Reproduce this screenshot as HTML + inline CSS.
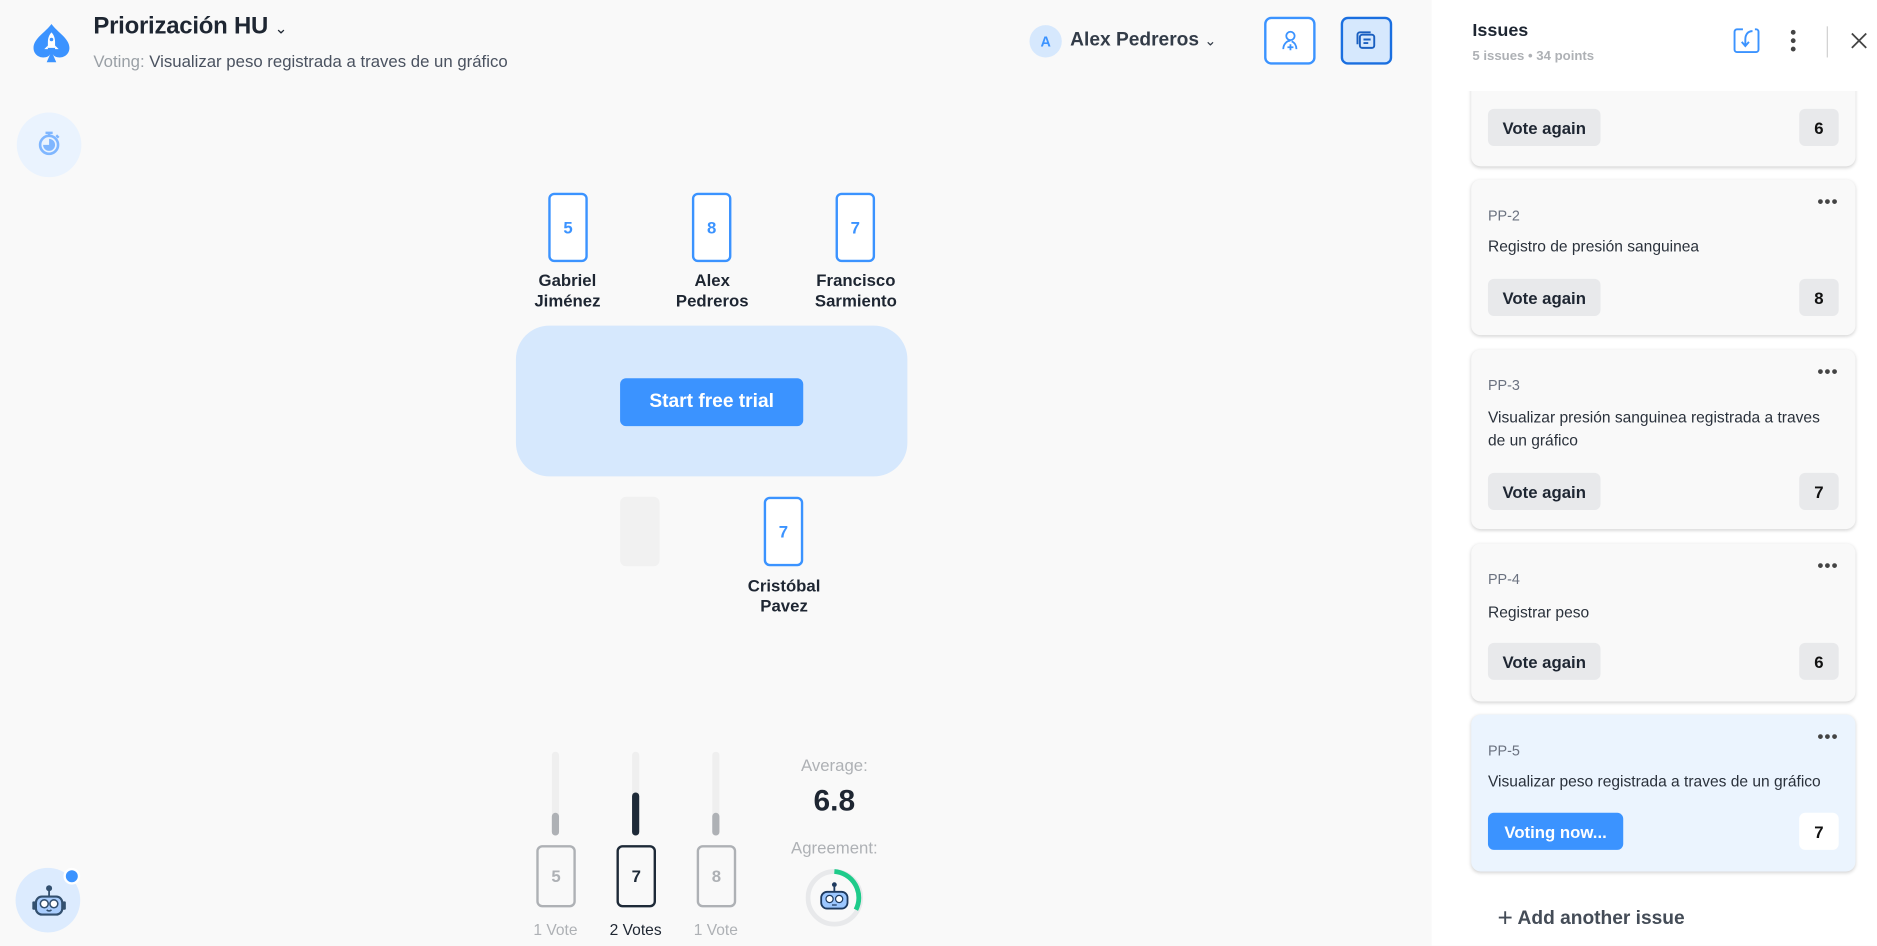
<!DOCTYPE html>
<html><head><meta charset="utf-8"><style>
*{box-sizing:border-box;margin:0;padding:0}
html,body{width:1877px;height:946px;overflow:hidden;background:#f9f9f9;font-family:"Liberation Sans","DejaVu Sans",sans-serif}
#w{position:absolute;left:0;top:0;width:1568px;height:790px;transform:scale(1.19707);transform-origin:0 0}
.a{position:absolute}
.pc{position:absolute;width:33px;height:58px;border:2px solid #3b93ff;border-radius:5px;background:#fff;color:#3b93ff;font-weight:bold;font-size:14px;display:flex;align-items:center;justify-content:center}
.nm{position:absolute;width:120px;text-align:center;font-weight:bold;font-size:14px;line-height:17px;color:#1e2632}
.card{position:absolute;left:1229px;width:321px;background:#f9f9f9;border-radius:8px;box-shadow:0 1px 3px rgba(0,0,0,.18)}
.id{position:absolute;left:14px;font-size:12px;color:#6b7280}
.tt{position:absolute;left:14px;font-size:13px;color:#2a313b;line-height:19px;width:290px}
.va{position:absolute;left:14px;width:94px;height:31px;background:#e8e9eb;border-radius:5px;font-weight:bold;font-size:14px;color:#1e2632;display:flex;align-items:center;justify-content:center}
.sc{position:absolute;left:274px;width:33px;height:31px;background:#e8e9eb;border-radius:5px;font-weight:bold;font-size:14px;color:#111;display:flex;align-items:center;justify-content:center}
.dots{position:absolute;right:14px;font-size:14px;color:#444;letter-spacing:1px;font-weight:bold}
.bar{position:absolute;width:6px;height:70px;top:628px;background:#efefef;border-radius:3px}
.vc{position:absolute;top:706px;width:33px;height:52px;border:2px solid #aeb1b5;border-radius:5px;color:#aeb1b5;font-weight:bold;font-size:14px;display:flex;align-items:center;justify-content:center}
.vl{position:absolute;top:769px;width:80px;text-align:center;font-size:13px;color:#aeb1b5}
</style></head><body><div id="w">
<svg class="a" style="left:24px;top:18px" width="38" height="36" viewBox="0 0 38 36"><path d="M19 2C14 9 4 14 4 22c0 5 4 8 8 8 3 0 5-1 6-3l-3 7h8l-3-7c1 2 3 3 6 3 4 0 8-3 8-8 0-8-10-13-15-20z" fill="#3b93ff"/><path d="M19 9c-2 2-3 5-3 8v5h6v-5c0-3-1-6-3-8z" fill="#fff"/><circle cx="19" cy="15" r="1.5" fill="#3b93ff"/><path d="M16 20l-3 3h3zM22 20l3 3h-3z" fill="#fff"/></svg>
<div class="a" style="left:78px;top:11px;font-size:20px;font-weight:bold;color:#1e2632;letter-spacing:-0.2px">Priorización HU <span style="font-size:13px;font-weight:normal">&#8964;</span></div>
<div class="a" style="left:78px;top:43px;font-size:14px;color:#4a5260"><span style="color:#9aa0a6">Voting:</span> Visualizar peso registrada a traves de un gráfico</div>
<div class="a" style="left:14px;top:94px;width:54px;height:54px;border-radius:50%;background:#eaf3fe"></div>
<svg class="a" style="left:30px;top:108px" width="22" height="24" viewBox="0 0 22 24"><circle cx="11" cy="13" r="7.5" fill="none" stroke="#7fb6ff" stroke-width="2.2"/><path d="M11 13V8a5 5 0 1 1-5 5z" fill="#7fb6ff"/><path d="M8 3h6M11 3v2M17 5l2 2" stroke="#7fb6ff" stroke-width="2"/></svg>
<div class="a" style="left:860px;top:21px;width:27px;height:27px;border-radius:50%;background:#d6e8fd;color:#3b93ff;font-size:12px;font-weight:bold;display:flex;align-items:center;justify-content:center">A</div>
<div class="a" style="left:894px;top:25px;font-size:16px;font-weight:bold;color:#333c48">Alex Pedreros <span style="font-size:12px;font-weight:normal">&#8964;</span></div>
<div class="a" style="left:1056px;top:14px;width:43px;height:40px;border:2px solid #3b93ff;border-radius:6px;background:#fff"></div>
<svg class="a" style="left:1068px;top:24px" width="20" height="20" viewBox="0 0 20 20"><circle cx="10" cy="6" r="3.5" fill="none" stroke="#3b93ff" stroke-width="1.5"/><path d="M4 17c0-4 3-7 6-7M10 13v5M7.5 15.5h5" stroke="#3b93ff" stroke-width="1.5" fill="none"/><path d="M15 17c0-3-1.5-5.5-4-6.5" stroke="#3b93ff" stroke-width="1.5" fill="none"/></svg>
<div class="a" style="left:1120px;top:14px;width:43px;height:40px;border:2px solid #1a6fe0;border-radius:6px;background:#d6e8fd"></div>
<svg class="a" style="left:1131px;top:24px" width="20" height="20" viewBox="0 0 20 20"><rect x="5" y="5" width="12" height="11" rx="2" fill="none" stroke="#1a5fc0" stroke-width="1.6"/><path d="M3 13V5a2 2 0 0 1 2-2h9" fill="none" stroke="#1a5fc0" stroke-width="1.6"/><path d="M8 9h6M8 12h4" stroke="#1a5fc0" stroke-width="1.6"/></svg>
<div class="pc" style="left:458px;top:161px">5</div>
<div class="pc" style="left:578px;top:161px">8</div>
<div class="pc" style="left:698px;top:161px">7</div>
<div class="nm" style="left:414px;top:226px">Gabriel<br>Jiménez</div>
<div class="nm" style="left:535px;top:226px">Alex<br>Pedreros</div>
<div class="nm" style="left:655px;top:226px">Francisco<br>Sarmiento</div>
<div class="a" style="left:431px;top:272px;width:327px;height:126px;border-radius:28px;background:#d6e8fd"></div>
<div class="a" style="left:518px;top:316px;width:153px;height:40px;border-radius:5px;background:#3b93ff;color:#fff;font-weight:bold;font-size:16px;display:flex;align-items:center;justify-content:center">Start free trial</div>
<div class="a" style="left:518px;top:415px;width:33px;height:58px;border-radius:5px;background:#f1f1f1"></div>
<div class="pc" style="left:638px;top:415px">7</div>
<div class="nm" style="left:595px;top:481px">Cristóbal<br>Pavez</div>
<div class="bar" style="left:461px"><div class="a" style="left:0;bottom:0;width:6px;height:19px;border-radius:3px;background:#aeb1b5"></div></div>
<div class="bar" style="left:528px"><div class="a" style="left:0;bottom:0;width:6px;height:36px;border-radius:3px;background:#1e2a38"></div></div>
<div class="bar" style="left:595px"><div class="a" style="left:0;bottom:0;width:6px;height:19px;border-radius:3px;background:#aeb1b5"></div></div>
<div class="vc" style="left:448px">5</div>
<div class="vc" style="left:515px;border-color:#1e2a38;color:#1e2a38">7</div>
<div class="vc" style="left:582px">8</div>
<div class="vl" style="left:424px">1 Vote</div>
<div class="vl" style="left:491px;color:#1e2632">2 Votes</div>
<div class="vl" style="left:558px">1 Vote</div>
<div class="a" style="left:647px;top:631px;width:100px;text-align:center;font-size:14px;color:#aeb1b5">Average:</div>
<div class="a" style="left:647px;top:655px;width:100px;text-align:center;font-size:25px;font-weight:bold;color:#1e2632">6.8</div>
<div class="a" style="left:642px;top:700px;width:110px;text-align:center;font-size:14px;color:#aeb1b5">Agreement:</div>
<svg class="a" style="left:673px;top:725px" width="48" height="50" viewBox="0 0 48 50"><circle cx="24" cy="25" r="22" fill="none" stroke="#e8e9eb" stroke-width="4"/><path d="M24 3a22 22 0 0 1 18 32" fill="none" stroke="#1ecb8a" stroke-width="4"/><circle cx="24" cy="14" r="2" fill="#1e3a5f"/><path d="M24 16v4" stroke="#1e3a5f" stroke-width="1.5"/><rect x="13" y="20" width="22" height="14" rx="5" fill="#9cc7ff" stroke="#1e3a5f" stroke-width="1.5"/><circle cx="20" cy="26" r="3" fill="#fff" stroke="#1e3a5f"/><circle cx="28" cy="26" r="3" fill="#fff" stroke="#1e3a5f"/><path d="M22 31h4" stroke="#1e3a5f"/></svg>
<div class="a" style="left:13px;top:725px;width:54px;height:54px;border-radius:50%;background:#dcebfe"></div>
<div class="a" style="left:53px;top:725px;width:14px;height:14px;border-radius:50%;background:#3b93ff;border:2px solid #fff"></div>
<svg class="a" style="left:25px;top:738px" width="32" height="30" viewBox="0 0 32 30"><circle cx="16" cy="4" r="2.5" fill="#33506f"/><path d="M16 6v5" stroke="#33506f" stroke-width="1.5"/><rect x="5" y="11" width="22" height="15" rx="5" fill="#a9cdfd" stroke="#33506f" stroke-width="1.8"/><rect x="2" y="15" width="3" height="7" rx="1" fill="#33506f"/><rect x="27" y="15" width="3" height="7" rx="1" fill="#33506f"/><circle cx="12" cy="17" r="3.3" fill="#fff" stroke="#33506f" stroke-width="1.3"/><circle cx="20" cy="17" r="3.3" fill="#fff" stroke="#33506f" stroke-width="1.3"/><path d="M14 22q2 2 4 0" stroke="#33506f" fill="none" stroke-width="1.3"/></svg>
<div class="a" style="left:1196px;top:0;width:372px;height:790px;background:#fff"></div>
<div class="a" style="left:1230px;top:17px;font-size:15px;font-weight:bold;color:#1e2632">Issues</div>
<div class="a" style="left:1230px;top:41px;font-size:11px;font-weight:bold;color:#aeb1b5">5 issues • 34 points</div>
<svg class="a" style="left:1448px;top:23px" width="22" height="22" viewBox="0 0 22 22"><path d="M8 1.5H3a2 2 0 0 0-2 2v15a2 2 0 0 0 2 2h16a2 2 0 0 0 2-2V3.5a2 2 0 0 0-2-2h-1" fill="none" stroke="#3b93ff" stroke-width="1.6"/><path d="M16 3c-4 0-6 3-6 7v5M7 12l3 3.5 3-3.5" fill="none" stroke="#3b93ff" stroke-width="1.6"/></svg>
<div class="a" style="left:1496px;top:25px;width:4px;height:18px"><div class="a" style="top:0;width:4px;height:4px;border-radius:50%;background:#444"></div><div class="a" style="top:7px;width:4px;height:4px;border-radius:50%;background:#444"></div><div class="a" style="top:14px;width:4px;height:4px;border-radius:50%;background:#444"></div></div>
<div class="a" style="left:1526px;top:22px;width:1px;height:26px;background:#d0d0d0"></div>
<svg class="a" style="left:1546px;top:27px" width="14" height="14" viewBox="0 0 14 14"><path d="M1 1l12 12M13 1L1 13" stroke="#444" stroke-width="1.5"/></svg>
<div class="a" style="left:1196px;top:76px;width:372px;height:660px;overflow:hidden">
<div class="card" style="left:33px;top:-20px;height:83px"><div class="va" style="top:35px">Vote again</div><div class="sc" style="top:35px">6</div></div>
<div class="card" style="left:33px;top:74px;height:130px"><div class="dots" style="top:10px">•••</div><div class="id" style="top:23px">PP-2</div><div class="tt" style="top:46px">Registro de presión sanguinea</div><div class="va" style="top:83px">Vote again</div><div class="sc" style="top:83px">8</div></div>
<div class="card" style="left:33px;top:216px;height:150px"><div class="dots" style="top:10px">•••</div><div class="id" style="top:23px">PP-3</div><div class="tt" style="top:47px">Visualizar presión sanguinea registrada a traves de un gráfico</div><div class="va" style="top:103px">Vote again</div><div class="sc" style="top:103px">7</div></div>
<div class="card" style="left:33px;top:378px;height:132px"><div class="dots" style="top:10px">•••</div><div class="id" style="top:23px">PP-4</div><div class="tt" style="top:48px">Registrar peso</div><div class="va" style="top:83px">Vote again</div><div class="sc" style="top:83px">6</div></div>
<div class="card" style="left:33px;top:521px;height:131px;background:#ebf4fe"><div class="dots" style="top:10px">•••</div><div class="id" style="top:23px">PP-5</div><div class="tt" style="top:46px">Visualizar peso registrada a traves de un gráfico</div><div class="va" style="top:82px;width:113px;background:#3b93ff;color:#fff">Voting now...</div><div class="sc" style="top:82px;background:#fff">7</div></div>
</div>
<div class="a" style="left:1251px;top:754px;font-size:16px;font-weight:bold;color:#444c57"><span style="font-weight:normal;font-size:22px;vertical-align:-2px">+</span> Add another issue</div>
</div></body></html>
